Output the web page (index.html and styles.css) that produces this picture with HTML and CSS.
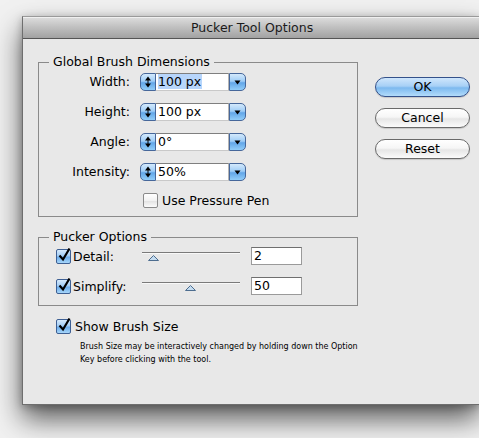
FILE: index.html
```html
<!DOCTYPE html>
<html>
<head>
<meta charset="utf-8">
<title>Pucker Tool Options</title>
<link rel="stylesheet" href="styles.css">
</head>
<body>
<div class="window">
  <div class="titlebar">Pucker Tool Options</div>
  <div class="content">
    <div class="left">
      <fieldset class="group g1">
        <legend>Global Brush Dimensions</legend>
        <div class="dims">
          <span class="lbl">Width:</span>
          <div class="combo">
            <span class="stepper"><svg width="14" height="16" viewBox="0 0 14 16"><path d="M7 2.5 L4 6.5 L10 6.5Z M7 13.5 L4 9.5 L10 9.5Z" fill="#000"/><rect x="6.5" y="6" width="1" height="4" fill="#000"/></svg></span>
            <span class="field"><span class="sel">100 px</span></span>
            <span class="drop"><svg width="15" height="16" viewBox="0 0 15 16"><path d="M4.5 6.5 L10.5 6.5 L7.5 10.5Z" fill="#000"/></svg></span>
          </div>
          <span class="lbl">Height:</span>
          <div class="combo">
            <span class="stepper"><svg width="14" height="16" viewBox="0 0 14 16"><path d="M7 2.5 L4 6.5 L10 6.5Z M7 13.5 L4 9.5 L10 9.5Z" fill="#000"/><rect x="6.5" y="6" width="1" height="4" fill="#000"/></svg></span>
            <span class="field">100 px</span>
            <span class="drop"><svg width="15" height="16" viewBox="0 0 15 16"><path d="M4.5 6.5 L10.5 6.5 L7.5 10.5Z" fill="#000"/></svg></span>
          </div>
          <span class="lbl">Angle:</span>
          <div class="combo">
            <span class="stepper"><svg width="14" height="16" viewBox="0 0 14 16"><path d="M7 2.5 L4 6.5 L10 6.5Z M7 13.5 L4 9.5 L10 9.5Z" fill="#000"/><rect x="6.5" y="6" width="1" height="4" fill="#000"/></svg></span>
            <span class="field">0°</span>
            <span class="drop"><svg width="15" height="16" viewBox="0 0 15 16"><path d="M4.5 6.5 L10.5 6.5 L7.5 10.5Z" fill="#000"/></svg></span>
          </div>
          <span class="lbl">Intensity:</span>
          <div class="combo">
            <span class="stepper"><svg width="14" height="16" viewBox="0 0 14 16"><path d="M7 2.5 L4 6.5 L10 6.5Z M7 13.5 L4 9.5 L10 9.5Z" fill="#000"/><rect x="6.5" y="6" width="1" height="4" fill="#000"/></svg></span>
            <span class="field">50%</span>
            <span class="drop"><svg width="15" height="16" viewBox="0 0 15 16"><path d="M4.5 6.5 L10.5 6.5 L7.5 10.5Z" fill="#000"/></svg></span>
          </div>
        </div>
        <div class="pressure">
          <span class="cb"></span>
          <span class="cb-text">Use Pressure Pen</span>
        </div>
      </fieldset>

      <fieldset class="group g2">
        <legend>Pucker Options</legend>
        <div class="opt-row">
          <span class="cb checked"><svg width="17" height="17" viewBox="0 0 17 17"><path d="M3.5 8.5 L7 12.5 L13.5 1.5" fill="none" stroke="#000" stroke-width="2.2" stroke-linejoin="miter"/></svg></span>
          <span class="opt-lbl">Detail:</span>
          <span class="slider"><span class="thumb" style="left: 6px"><svg width="11" height="6" viewBox="0 0 11 6"><path d="M5.5 0.5 L10.5 5.5 L0.5 5.5Z" fill="#c4dcf0" stroke="#4d6d8f" stroke-width="1"/></svg></span></span>
          <span class="num">2</span>
        </div>
        <div class="opt-row">
          <span class="cb checked"><svg width="17" height="17" viewBox="0 0 17 17"><path d="M3.5 8.5 L7 12.5 L13.5 1.5" fill="none" stroke="#000" stroke-width="2.2" stroke-linejoin="miter"/></svg></span>
          <span class="opt-lbl">Simplify:</span>
          <span class="slider"><span class="thumb" style="left: 43px"><svg width="11" height="6" viewBox="0 0 11 6"><path d="M5.5 0.5 L10.5 5.5 L0.5 5.5Z" fill="#c4dcf0" stroke="#4d6d8f" stroke-width="1"/></svg></span></span>
          <span class="num">50</span>
        </div>
      </fieldset>

      <div class="show">
        <span class="cb checked"><svg width="17" height="17" viewBox="0 0 17 17"><path d="M3.5 8.5 L7 12.5 L13.5 1.5" fill="none" stroke="#000" stroke-width="2.2" stroke-linejoin="miter"/></svg></span>
        <span class="show-text">Show Brush Size</span>
      </div>
      <p class="help">Brush Size may be interactively changed by holding down the Option<br>Key before clicking with the tool.</p>
    </div>

    <div class="buttons">
      <button class="btn default">OK</button>
      <button class="btn">Cancel</button>
      <button class="btn">Reset</button>
    </div>
  </div>
</div>
</body>
</html>
```

FILE: styles.css
```css
html {
  overflow: hidden;
  height: 438px;
}
body {
  margin: 0;
  padding: 0;
  height: 438px;
  background: #f1f1f1;
  font-family: "DejaVu Sans", "Lucida Grande", sans-serif;
  font-size: 12.5px;
  color: #000;
}
.window {
  margin: 16px 0 0 22px;
  width: calc(100% - 22px);
  height: 389px;
  box-sizing: border-box;
  border: 1px solid #6e6e6e;
  border-top-color: #9a9a9a;
  border-right: none;
  background: #e8e8e8;
  box-shadow: 0 14px 26px rgba(0, 0, 0, 0.62), 0 2px 8px rgba(0, 0, 0, 0.25);
}
.titlebar {
  height: 21px;
  border-bottom: 1px solid #555;
  background: linear-gradient(#dedede, #c2c2c2 45%, #a2a2a2);
  line-height: 21px;
  font-size: 12.5px;
  color: #1a1a1a;
  box-shadow: inset 0 1px 0 #f0f0f0;
  padding-left: 168px;
}
.content {
  display: flex;
  padding: 15px 0 0 15px;
}
.left {
  width: 320px;
  display: flex;
  flex-direction: column;
}
.group {
  margin: 0;
  padding: 0;
  min-width: 0;
  border: 1px solid #8a8a8a;
  width: 320px;
  box-sizing: border-box;
}
.group legend {
  margin-left: 10px;
  padding: 0 4px;
  line-height: 16px;
  height: 16px;
  font-size: 12.5px;
}
.g2 {
  margin-top: 12px;
  padding-bottom: 10px;
}
.dims {
  display: grid;
  grid-template-columns: 91px auto;
  grid-auto-rows: 18px;
  column-gap: 10px;
  row-gap: 12px;
  margin-top: 3px;
  justify-content: start;
}
.lbl {
  text-align: right;
  line-height: 18px;
}
.combo {
  display: flex;
  height: 18px;
}
.stepper {
  width: 16px;
  height: 18px;
  box-sizing: border-box;
  border: 1px solid #46679a;
  border-radius: 5px 0 0 5px;
  background: linear-gradient(#d3e9fc, #9fcdf6 45%, #62a6e8 55%, #92cef9);
  display: flex;
  align-items: center;
  justify-content: center;
}
.field {
  width: 73px;
  height: 18px;
  box-sizing: border-box;
  background: #fff;
  border-top: 1px solid #7f7f7f;
  border-bottom: 1px solid #c9c9c9;
  border-right: 1px solid #b5b5b5;
  padding-left: 2px;
  line-height: 16px;
  font-size: 12.5px;
}
.sel {
  background: #b7d5fb;
  padding-right: 1px;
}
.drop {
  width: 17px;
  height: 18px;
  box-sizing: border-box;
  border: 1px solid #46679a;
  border-radius: 0 5px 5px 0;
  background: linear-gradient(#d3e9fc, #9fcdf6 45%, #62a6e8 55%, #92cef9);
  display: flex;
  align-items: center;
  justify-content: center;
}
.cb {
  width: 15px;
  height: 15px;
  box-sizing: border-box;
  border: 1px solid #8a8a8a;
  border-radius: 2px;
  background: linear-gradient(#ffffff, #f2f2f2 50%, #e3e3e3 55%, #fbfbfb);
  position: relative;
  flex: none;
}
.cb.checked {
  border-color: #3d5f93;
  background: linear-gradient(#d6eafc, #a2cdf5 45%, #6cacea 55%, #a6d6fa);
}
.cb svg {
  position: absolute;
  left: -1px;
  top: -3px;
}
.pressure {
  display: flex;
  align-items: center;
  margin: 11px 0 0 104px;
  height: 16px;
  padding-bottom: 8px;
}
.pressure .cb-text {
  margin-left: 4px;
}
.opt-row {
  display: flex;
  align-items: center;
  height: 18px;
  margin: 12px 0 0 17px;
}
.opt-row:first-of-type {
  margin-top: 2px;
}
.opt-lbl {
  margin-left: 2px;
  width: 69px;
}
.slider {
  position: relative;
  width: 98px;
  height: 18px;
}
.slider::before {
  content: "";
  position: absolute;
  left: 0;
  right: 0;
  top: 5px;
  height: 1px;
  background: #7a7a7a;
  border-bottom: 1px solid #f8f8f8;
}
.thumb {
  position: absolute;
  top: 8px;
  width: 11px;
  height: 6px;
  display: block;
  line-height: 0;
}
.num {
  margin-left: 11px;
  width: 51px;
  height: 18px;
  box-sizing: border-box;
  background: #fff;
  border: 1px solid #9a9a9a;
  border-top-color: #6f6f6f;
  padding-left: 2px;
  line-height: 16px;
}
.show {
  display: flex;
  align-items: center;
  margin: 12px 0 0 18px;
  height: 16px;
}
.show-text {
  margin-left: 4px;
}
.help {
  margin: 6px 0 0 42px;
  font-size: 8px;
  line-height: 13px;
  white-space: nowrap;
}
.buttons {
  display: flex;
  flex-direction: column;
  gap: 11px;
  margin: 23px 0 0 17px;
}
.btn {
  width: 95px;
  height: 20px;
  box-sizing: border-box;
  border: 1px solid #6a6a6a;
  border-radius: 10px;
  background: linear-gradient(#ffffff, #f6f6f6 45%, #e6e6e6 55%, #fbfbfb);
  font-family: "DejaVu Sans", "Lucida Grande", sans-serif;
  font-size: 12.5px;
  color: #000;
  padding: 0;
  line-height: 18px;
  box-shadow: 0 1px 1px rgba(0, 0, 0, 0.15);
}
.btn.default {
  border-color: #34518a;
  background: linear-gradient(#cfe6fc, #a7d0f6 45%, #7db9ef 55%, #b2dcfb);
}
```
